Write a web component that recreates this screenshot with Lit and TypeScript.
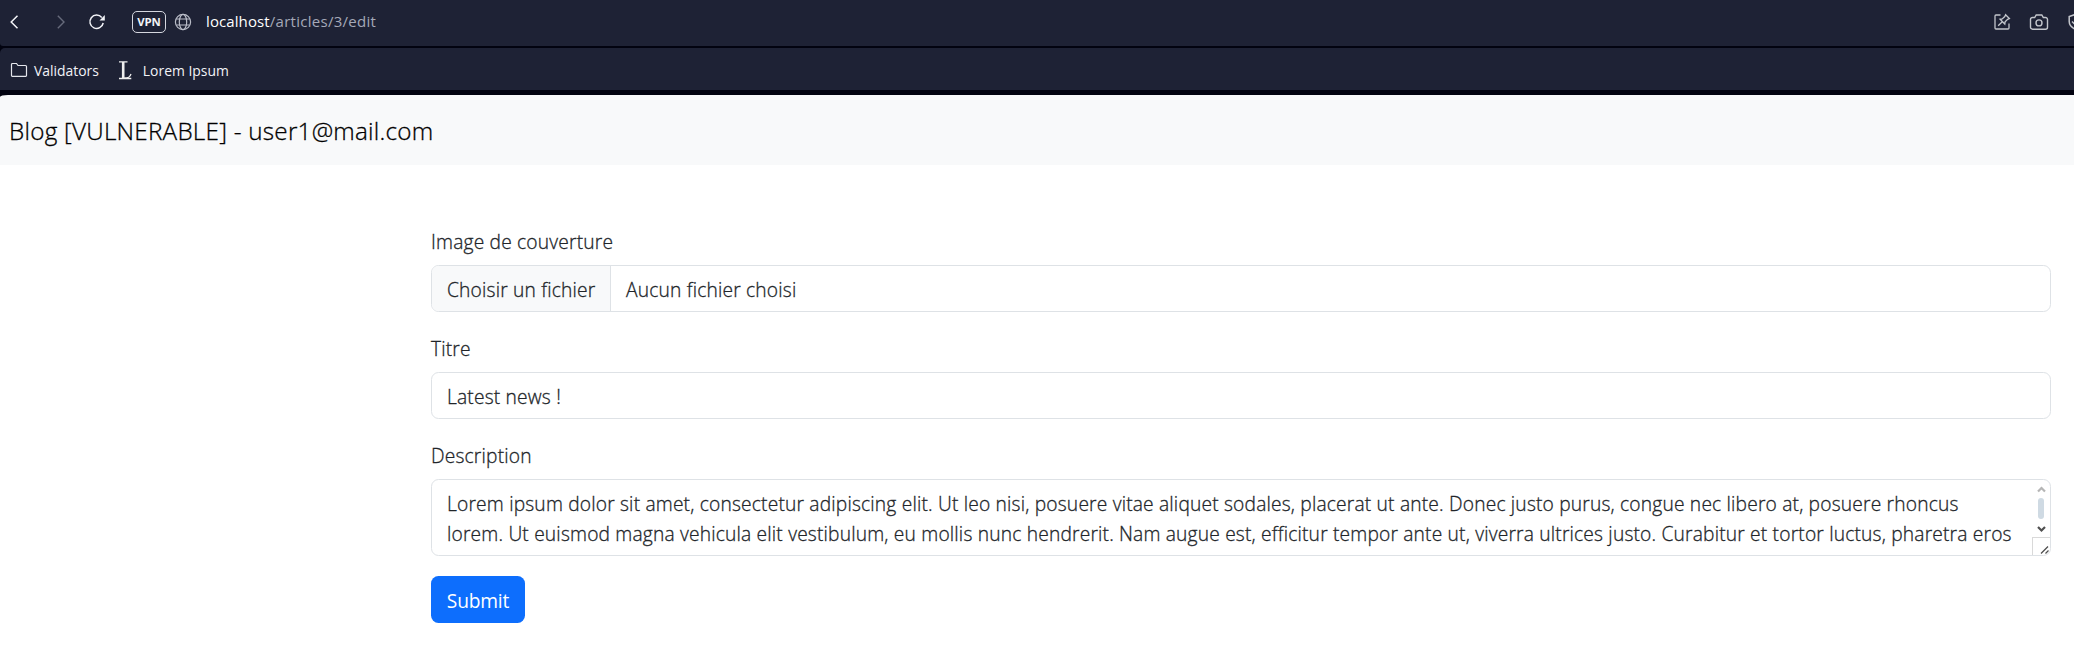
import { LitElement, html, css } from "lit";
import { customElement } from "lit/decorators.js";

const reset = css`
  * { box-sizing: border-box; }
  svg { display: block; fill: none; flex: none; }
`;

@customElement("browser-chrome")
class BrowserChrome extends LitElement {
  static styles = [reset, css`
    :host { display: block; background: #020310; color: #f2f3f7; font-family: "Open Sans", "Noto Sans", sans-serif; height: 95px; white-space: nowrap; overflow: hidden; }
    .bar { background: #1e2235; display: flex; align-items: center; overflow: hidden; }
    .address { height: 46px; padding: 0 0 2px 8px; border-bottom-left-radius: 3px; }
    .bookmarks { height: 42px; margin-top: 2px; padding: 2px 0 0 10px; border-top-left-radius: 5px; font-size: 13.9px; }
    .fwd { margin-left: 31px; }
    .reload { margin-left: 21px; }
    .vpn { margin-left: 26px; width: 34px; height: 22px; border: 1.5px solid #d5d7df; border-radius: 5px; font-size: 11.4px; font-weight: 700; line-height: 20px; text-align: center; letter-spacing: -0.15px; }
    .globe { margin-left: 8px; }
    .url { margin: -2px 0 0 14px; font-size: 15px; color: #a5a9b8; letter-spacing: 0.28px; }
    .host { color: #fff; letter-spacing: 0.1px; }
    .tools { margin-left: auto; display: flex; gap: 18px; width: 81px; }
    .validators { margin-left: 6px; }
    .letter { margin-left: 19px; width: 16px; }
    .lorem { margin-left: 9px; }
  `];
  render() {
    return html`
      <div class="bar address">
        <svg class="back" width="16" height="18" viewBox="0 0 16 18" stroke="#f2f3f7" stroke-width="1.5"><path d="M9.500 2.700 3.200 9l6.300 6.300"/></svg>
        <svg class="fwd" width="12" height="18" viewBox="0 0 12 18" stroke="#666a7b" stroke-width="1.4"><path d="M2.800 2.700 9 9l-6.200 6.300"/></svg>
        <svg class="reload" width="18" height="18" viewBox="0 0 18 18" stroke="#f2f3f7" stroke-width="1.5"><path d="M13.800 4.500A6.700 6.700 0 1 0 15.200 10"/><path d="M16.800 2v5.500h-5.300z" fill="#f2f3f7" stroke="none"/></svg>
        <div class="vpn">VPN</div>
        <svg class="globe" width="18" height="18" viewBox="0 0 18 18" stroke="#b9bcc7" stroke-width="1.2"><circle cx="9" cy="9" r="7.6"/><ellipse cx="9" cy="9" rx="3.7" ry="7.6"/><path d="M2.200 6h13.600M2.200 12h13.600"/></svg>
        <div class="url"><span class="host">localhost</span>/articles/3/edit</div>
        <div class="tools">
          <svg width="18" height="18" viewBox="0 0 18 18" stroke="#c3c6cc" stroke-width="1.3"><path d="M7.500 2H3a1 1 0 0 0-1 1v12a1 1 0 0 0 1 1h12a1 1 0 0 0 1-1v-4.500"/><path d="m12.600 1.700 3.800 3.800-1.800.8-2.500 2.600-.3 2.100-4.700-4.700 2.100-.3 2.600-2.500zM9 9l-3.800 3.800"/></svg>
          <svg width="20" height="18" viewBox="0 0 20 18" stroke="#c3c6cc" stroke-width="1.4"><path d="M7.200 2h5.600l1.500 2.500h2A2 2 0 0 1 18.500 6.500v7.700a2 2 0 0 1-2 2h-13a2 2 0 0 1-2-2V6.500a2 2 0 0 1 2-2h2.200z"/><circle cx="10" cy="9.900" r="3"/></svg>
          <svg width="18" height="18" viewBox="0 0 18 18" stroke="#c3c6cc" stroke-width="1.500"><path d="M9 1.200 2.200 3.500v5c0 3.800 3 6.400 6.800 8 3.800-1.600 6.800-4.200 6.800-8v-5zM5 8.500l3 3 5-5"/></svg>
        </div>
      </div>
      <div class="bar bookmarks">
        <svg width="18" height="16" viewBox="0 0 18 16" stroke="#e4e6ec" stroke-width="1.200"><path d="M1.500 13.500v-11a1 1 0 0 1 1-1h4l1.500 2h7.500a1 1 0 0 1 1 1v9a.800.800 0 0 1-.8.800H2.300a.800.800 0 0 1-.8-.8z"/></svg>
        <span class="validators">Validators</span>
        <svg class="letter" width="16" height="20" viewBox="0 0 16 20" fill="#eee" stroke="#eeeeee"><path d="M1 1.800h8.500M1 18.500h12.300" stroke-width="1.300"/><path d="M5.200 2v16" stroke-width="2.600"/><path d="M6 18.200c4.500 0 6-1 7-4.200" stroke-width="1.300"/></svg>
        <span class="lorem">Lorem Ipsum</span>
      </div>
    `;
  }
}

@customElement("article-form")
class ArticleForm extends LitElement {
  static styles = [reset, css`
    :host { display: flex; flex-direction: column; align-items: stretch; gap: 20px; padding: 60px 23px 28px 431px; color: #212529; font: 300 19.2px/30px "Open Sans", "Noto Sans", sans-serif; letter-spacing: 0.183px; -webkit-text-stroke: 0.3px #212529; white-space: nowrap; }
    .field { display: flex; flex-direction: column; gap: 10px; }
    .label { height: 30px; padding-top: 1.5px; }
    .control { height: 47px; border: 1px solid #dee2e6; border-radius: 7.5px; background: #fff; display: flex; overflow: hidden; line-height: 48px; padding-left: 15px; }
    .file { padding-left: 0; }
    .pick { background: #f8f9fa; border-right: 1px solid #dee2e6; width: 179px; padding-left: 15px; margin-right: 15px; }
    .area { height: 77px; line-height: 30px; justify-content: space-between; }
    .copy { padding-top: 9px; }
    .scroll { width: 18px; display: flex; flex-direction: column; justify-content: space-between; align-items: stretch; }
    .grip { border-left: 1px solid #d9d9d9; border-top: 1px solid #d9d9d9; height: 18px; }
    .submit { align-self: flex-start; width: 94px; height: 47px; border: 0; border-radius: 7.500px; background: #0d6efd; color: #fff; font: 400 19.200px/48px "Open Sans", "Noto Sans", sans-serif; letter-spacing: -0.2px; -webkit-text-stroke: 0; text-align: center; padding: 1px 0 0; }
  `];
  render() {
    return html`
      <div class="field"><div class="label">Image de couverture</div>
        <div class="control file"><span class="pick">Choisir un fichier</span><span>Aucun fichier choisi</span></div></div>
      <div class="field"><div class="label">Titre</div>
        <div class="control">Latest news !</div></div>
      <div class="field"><div class="label">Description</div>
        <div class="control area">
          <div class="copy">
            <div>Lorem ipsum dolor sit amet, consectetur adipiscing elit. Ut leo nisi, posuere vitae aliquet sodales, placerat ut ante. Donec justo purus, congue nec libero at, posuere rhoncus</div>
            <div>lorem. Ut euismod magna vehicula elit vestibulum, eu mollis nunc hendrerit. Nam augue est, efficitur tempor ante ut, viverra ultrices justo. Curabitur et tortor luctus, pharetra eros</div>
          </div>
          <div class="scroll">
            <svg width="18" height="56" viewBox="0 0 18 56"><path d="M6 11.500 9.500 8l3.500 3.500" stroke="#b5b5b5" stroke-width="2.200"/><rect x="6" y="18" width="6" height="21" rx="3" fill="#cfdae3"/><path d="m6 47 3.500 3.500L13 47" stroke="#505050" stroke-width="2.200"/></svg>
            <div class="grip"><svg width="17" height="17" viewBox="0 0 17 17" stroke="#505050" stroke-width="1.300"><path d="m8 15.500 7-7M12.500 15.500l3-3"/></svg></div>
          </div>
        </div></div>
      <button class="submit">Submit</button>
    `;
  }
}

@customElement("app-root")
class AppRoot extends LitElement {
  static styles = [reset, css`
    :host { display: block; height: 651px; overflow: hidden; background: #fff; }
    .top { background: #020310; }
    .brand { height: 70px; padding: 0 0 0 9px; border-top-left-radius: 8px 2px; background: #f8f9fa; color: #000; font: 300 24.250px/72px "Open Sans", "Noto Sans", sans-serif; letter-spacing: 0.24px; -webkit-text-stroke: 0.3px #000; white-space: nowrap; }
  `];
  render() {
    return html`
      <browser-chrome></browser-chrome>
      <div class="top"><div class="brand">Blog [VULNERABLE] - user1@mail.com</div></div>
      <article-form></article-form>
    `;
  }
}
